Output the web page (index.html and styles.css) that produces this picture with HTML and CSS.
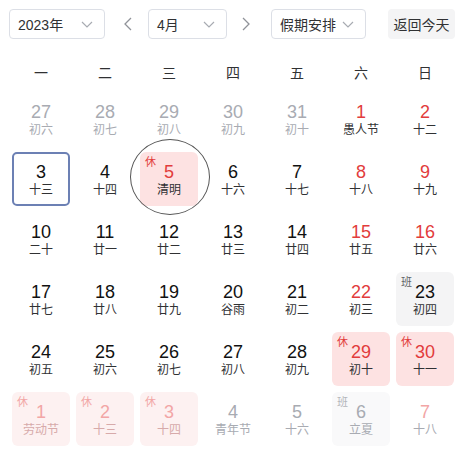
FILE: index.html
```html
<!DOCTYPE html>
<html lang="zh-CN">
<head>
<meta charset="utf-8">
<link rel="stylesheet" href="styles.css">
</head>
<body>
<div class="app">
  <div class="toolbar">
    <div class="select sel-year"><span>2023年</span><svg class="chev" width="12" height="7" viewBox="0 0 12 7"><path d="M1 1l5 5 5-5" fill="none" stroke="#a8abb2" stroke-width="1.2"/></svg></div>
    <div class="arrow arrow-prev"><svg width="8" height="14" viewBox="0 0 8 14"><path d="M7 1L1 7l6 6" fill="none" stroke="#909399" stroke-width="1.3"/></svg></div>
    <div class="select sel-month"><span>4月</span><svg class="chev" width="12" height="7" viewBox="0 0 12 7"><path d="M1 1l5 5 5-5" fill="none" stroke="#a8abb2" stroke-width="1.2"/></svg></div>
    <div class="arrow arrow-next"><svg width="8" height="14" viewBox="0 0 8 14"><path d="M1 1l6 6-6 6" fill="none" stroke="#909399" stroke-width="1.3"/></svg></div>
    <div class="select sel-hol"><span>假期安排</span><svg class="chev" width="12" height="7" viewBox="0 0 12 7"><path d="M1 1l5 5 5-5" fill="none" stroke="#a8abb2" stroke-width="1.2"/></svg></div>
    <div class="btn-today">返回今天</div>
  </div>
  <div class="weekdays">
    <div>一</div><div>二</div><div>三</div><div>四</div><div>五</div><div>六</div><div>日</div>
  </div>
  <div class="grid">
    <div class="cell other"><div class="num">27</div><div class="lunar">初六</div></div>
    <div class="cell other"><div class="num">28</div><div class="lunar">初七</div></div>
    <div class="cell other"><div class="num">29</div><div class="lunar">初八</div></div>
    <div class="cell other"><div class="num">30</div><div class="lunar">初九</div></div>
    <div class="cell other"><div class="num">31</div><div class="lunar">初十</div></div>
    <div class="cell weekend"><div class="num">1</div><div class="lunar">愚人节</div></div>
    <div class="cell weekend"><div class="num">2</div><div class="lunar">十二</div></div>

    <div class="cell today"><div class="num">3</div><div class="lunar">十三</div></div>
    <div class="cell"><div class="num">4</div><div class="lunar">十四</div></div>
    <div class="cell rest ring"><span class="tag">休</span><div class="num">5</div><div class="lunar">清明</div></div>
    <div class="cell"><div class="num">6</div><div class="lunar">十六</div></div>
    <div class="cell"><div class="num">7</div><div class="lunar">十七</div></div>
    <div class="cell weekend"><div class="num">8</div><div class="lunar">十八</div></div>
    <div class="cell weekend"><div class="num">9</div><div class="lunar">十九</div></div>

    <div class="cell"><div class="num">10</div><div class="lunar">二十</div></div>
    <div class="cell"><div class="num">11</div><div class="lunar">廿一</div></div>
    <div class="cell"><div class="num">12</div><div class="lunar">廿二</div></div>
    <div class="cell"><div class="num">13</div><div class="lunar">廿三</div></div>
    <div class="cell"><div class="num">14</div><div class="lunar">廿四</div></div>
    <div class="cell weekend"><div class="num">15</div><div class="lunar">廿五</div></div>
    <div class="cell weekend"><div class="num">16</div><div class="lunar">廿六</div></div>

    <div class="cell"><div class="num">17</div><div class="lunar">廿七</div></div>
    <div class="cell"><div class="num">18</div><div class="lunar">廿八</div></div>
    <div class="cell"><div class="num">19</div><div class="lunar">廿九</div></div>
    <div class="cell"><div class="num">20</div><div class="lunar">谷雨</div></div>
    <div class="cell"><div class="num">21</div><div class="lunar">初二</div></div>
    <div class="cell weekend"><div class="num">22</div><div class="lunar">初三</div></div>
    <div class="cell work"><span class="tag">班</span><div class="num">23</div><div class="lunar">初四</div></div>

    <div class="cell"><div class="num">24</div><div class="lunar">初五</div></div>
    <div class="cell"><div class="num">25</div><div class="lunar">初六</div></div>
    <div class="cell"><div class="num">26</div><div class="lunar">初七</div></div>
    <div class="cell"><div class="num">27</div><div class="lunar">初八</div></div>
    <div class="cell"><div class="num">28</div><div class="lunar">初九</div></div>
    <div class="cell rest"><span class="tag">休</span><div class="num">29</div><div class="lunar">初十</div></div>
    <div class="cell rest"><span class="tag">休</span><div class="num">30</div><div class="lunar">十一</div></div>

    <div class="cell other rest"><span class="tag">休</span><div class="num">1</div><div class="lunar">劳动节</div></div>
    <div class="cell other rest"><span class="tag">休</span><div class="num">2</div><div class="lunar">十三</div></div>
    <div class="cell other rest"><span class="tag">休</span><div class="num">3</div><div class="lunar">十四</div></div>
    <div class="cell other"><div class="num">4</div><div class="lunar">青年节</div></div>
    <div class="cell other"><div class="num">5</div><div class="lunar">十六</div></div>
    <div class="cell other work"><span class="tag">班</span><div class="num">6</div><div class="lunar">立夏</div></div>
    <div class="cell other weekend"><div class="num">7</div><div class="lunar">十八</div></div>
  </div>
</div>
</body>
</html>
```
FILE: styles.css
```css
* { box-sizing: border-box; }
html, body { margin: 0; padding: 0; background: #fff; }
body {
  font-family: "Liberation Sans", "Noto Sans CJK SC", sans-serif;
  color: #303133;
  width: 464px;
  height: 456px;
  overflow: hidden;
}
.app { padding: 9px 9px 0 9px; }
.toolbar {
  display: flex;
  align-items: center;
  height: 30px;
}
.select {
  height: 30px;
  border: 1px solid #dcdfe6;
  border-radius: 4px;
  display: flex;
  align-items: center;
  justify-content: space-between;
  padding: 0 11px 0 8px;
  font-size: 14px;
  color: #303133;
}
.sel-year { width: 96px; }
.sel-month { width: 79px; }
.sel-hol { width: 95px; }
.chev { display: block; }
.arrow {
  width: 20px;
  height: 30px;
  display: flex;
  align-items: center;
  justify-content: center;
}
.arrow-prev { margin: 0 10px 0 13px; }
.arrow-next { margin: 0 15px 0 9px; }
.btn-today {
  margin-left: 22px;
  width: 67px;
  height: 30px;
  border-radius: 4px;
  background: #f4f4f5;
  font-size: 14px;
  color: #303133;
  display: flex;
  align-items: center;
  justify-content: center;
}
.weekdays {
  display: grid;
  grid-template-columns: repeat(7, 64px);
  margin-top: 19px;
  height: 28px;
  font-size: 14px;
  color: #303133;
}
.weekdays div {
  display: flex;
  align-items: center;
  justify-content: center;
}
.grid {
  display: grid;
  grid-template-columns: repeat(7, 64px);
  grid-auto-rows: 60px;
  margin-top: 3px;
}
.cell {
  position: relative;
  margin: 3px;
  padding-top: 3px;
  border-radius: 6px;
  display: flex;
  flex-direction: column;
  align-items: center;
  justify-content: center;
}
.num {
  font-size: 18px;
  line-height: 20px;
  color: #111;
}
.lunar {
  font-size: 12px;
  line-height: 17px;
  color: #303133;
}
.tag {
  position: absolute;
  left: 5px;
  top: 3px;
  font-size: 11px;
  line-height: 14px;
  color: #606266;
}
.weekend .num { color: #e23c3c; }
.rest { background: #fde2e2; }
.rest .num, .rest .tag { color: #e23c3c; }
.work { background: #f4f4f5; }
.work .tag { color: #606266; }

.other .num { color: #a8abb2; }
.other .lunar { color: #a8abb2; }
.other.rest { background: #fdf1f1; }
.other.rest .num, .other.rest .tag { color: #f2a6a6; }
.other.rest .lunar { color: #d7aaaa; }
.other.work { background: #f9f9fa; }
.other.work .tag { color: #b4b6bb; }
.other.weekend .num { color: #f2a6a6; }

.today {
  border: 2px solid #6c80b4;
  border-radius: 5px;
}
.ring::after {
  content: "";
  position: absolute;
  left: -10px;
  top: -13px;
  width: 78px;
  height: 74px;
  border: 1px solid #555;
  border-radius: 50%;
}
```
